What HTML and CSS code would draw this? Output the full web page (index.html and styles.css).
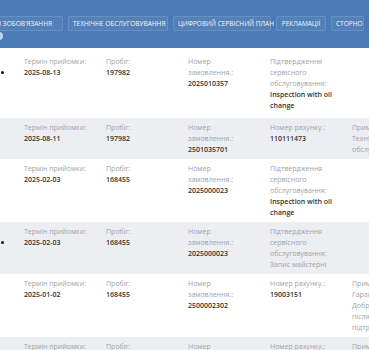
FILE: index.html
```html
<!DOCTYPE html>
<html lang="uk">
<head>
<meta charset="utf-8">
<link rel="stylesheet" href="styles.css">
</head>
<body>
<header class="topbar">
  <nav class="tabs">
    <span class="tab tab-warranty">Гарантійні зобов'язання</span>
    <span class="tab tab-service">Технічне обслуговування</span>
    <span class="tab tab-plan">Цифровий сервісний план</span>
    <span class="tab tab-claims">Рекламації</span>
    <span class="tab tab-storno">Сторно</span>
  </nav>
  <span class="badge"></span>
</header>
<main class="list">
  <div class="row row-first">
    <span class="mark"><i></i></span>
    <div class="cell"><span class="lbl">Термін прийомки:</span><span class="val">2025-08-13</span></div>
    <div class="cell"><span class="lbl">Пробіг:</span><span class="val">197982</span></div>
    <div class="cell"><span class="lbl">Номер замовлення.:</span><span class="val">2025010357</span></div>
    <div class="cell"><span class="lbl">Підтвердження сервісного обслуговування:</span><span class="val">Inspection with oil change</span></div>
    <div class="cell"></div>
  </div>
  <div class="row alt">
    <span class="mark"></span>
    <div class="cell"><span class="lbl">Термін прийомки:</span><span class="val">2025-08-11</span></div>
    <div class="cell"><span class="lbl">Пробіг:</span><span class="val">197982</span></div>
    <div class="cell"><span class="lbl">Номер замовлення.:</span><span class="val">2501035701</span></div>
    <div class="cell"><span class="lbl">Номер рахунку.:</span><span class="val">110111473</span></div>
    <div class="cell"><span class="lbl">Примітки:</span><span class="note">Технічне</span><span class="note">обслуговування</span></div>
  </div>
  <div class="row">
    <span class="mark"></span>
    <div class="cell"><span class="lbl">Термін прийомки:</span><span class="val">2025-02-03</span></div>
    <div class="cell"><span class="lbl">Пробіг:</span><span class="val">168455</span></div>
    <div class="cell"><span class="lbl">Номер замовлення.:</span><span class="val">2025000023</span></div>
    <div class="cell"><span class="lbl">Підтвердження сервісного обслуговування:</span><span class="val">Inspection with oil change</span></div>
    <div class="cell"></div>
  </div>
  <div class="row alt">
    <span class="mark"><i></i></span>
    <div class="cell"><span class="lbl">Термін прийомки:</span><span class="val">2025-02-03</span></div>
    <div class="cell"><span class="lbl">Пробіг:</span><span class="val">168455</span></div>
    <div class="cell"><span class="lbl">Номер замовлення.:</span><span class="val">2025000023</span></div>
    <div class="cell"><span class="lbl">Підтвердження сервісного обслуговування:</span><span class="note">Запис майстерні</span></div>
    <div class="cell"></div>
  </div>
  <div class="row">
    <span class="mark"></span>
    <div class="cell"><span class="lbl">Термін прийомки:</span><span class="val">2025-01-02</span></div>
    <div class="cell"><span class="lbl">Пробіг:</span><span class="val">168455</span></div>
    <div class="cell"><span class="lbl">Номер замовлення.:</span><span class="val">2500002302</span></div>
    <div class="cell"><span class="lbl">Номер рахунку.:</span><span class="val">19003151</span></div>
    <div class="cell"><span class="lbl">Примітки:</span><span class="note">Гарантія</span><span class="note">Добрий день,</span><span class="note">після ремонту</span><span class="note">підтримка</span></div>
  </div>
  <div class="row alt">
    <span class="mark"></span>
    <div class="cell"><span class="lbl">Термін прийомки:</span><span class="val">2025-01-02</span></div>
    <div class="cell"><span class="lbl">Пробіг:</span><span class="val">168455</span></div>
    <div class="cell"><span class="lbl">Номер</span><span class="lbl">замовлення.:</span></div>
    <div class="cell"><span class="lbl">Номер рахунку.:</span><span class="val">19003151</span></div>
    <div class="cell"><span class="lbl">Примітки:</span></div>
  </div>
</main>
</body>
</html>
```

FILE: styles.css
```css
* { box-sizing: border-box; }
html, body { margin: 0; padding: 0; }
body {
  width: 369px;
  height: 350px;
  overflow: hidden;
  background: #ffffff;
  font-family: "Open Sans", "Noto Sans", sans-serif;
  color: #333;
}
.topbar {
  position: relative;
  height: 48px;
  background: #4b7bb6;
  border-bottom: 1px solid #42700a0;
  border-bottom-color: #416fa8;
  overflow: hidden;
}
.tabs {
  display: flex;
  gap: 5px;
  padding-top: 16px;
  margin-left: -47px;
  white-space: nowrap;
}
.tab {
  display: block;
  flex: none;
  height: 15px;
  line-height: 13px;
  padding: 0 4px;
  text-align: center;
  font-size: 6.5px;
  text-transform: uppercase;
  color: #f2f6fb;
  background: rgba(255,255,255,0.04);
  border: 1px solid rgba(255,255,255,0.13);
  border-radius: 2px;
}
.tab-warranty { width: 110px; }
.tab-service { width: 100px; }
.tab-plan { width: 98px; }
.tab-claims { width: 50px; }
.tab-storno { width: 33px; }
.badge {
  position: absolute;
  left: -5px;
  top: 32px;
  width: 8px;
  height: 8px;
  border-radius: 50%;
  background: #b9d4ee;
}
.list { display: flex; flex-direction: column; }
.row {
  display: grid;
  grid-template-columns: 24px repeat(5, 82px);
  padding: 4px 0;
  font-size: 7px;
  line-height: 11px;
}
.row-first { padding-top: 8px; padding-bottom: 7px; }
.row.alt { background: #eceef2; }
.mark { position: relative; }
.mark i {
  position: absolute;
  left: 1px;
  top: 15px;
  width: 3px;
  height: 3px;
  border-radius: 50%;
  background: #111;
}
.cell {
  display: flex;
  flex-direction: column;
  padding-right: 13px;
}
.lbl { color: #9ea3ab; }
.val { color: #333; font-weight: 600; }
.note { color: #9ea3ab; }
```
